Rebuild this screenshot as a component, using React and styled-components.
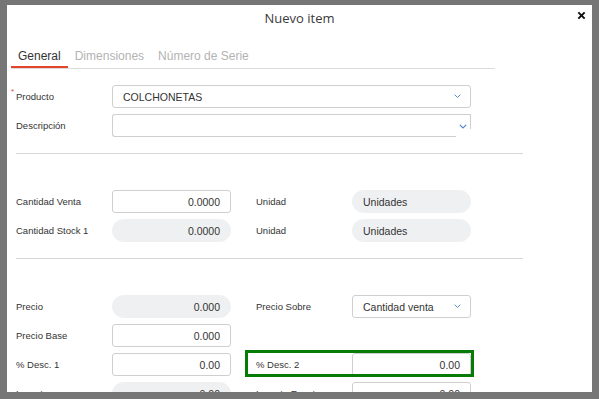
import React from "react";
import styled, { createGlobalStyle } from "styled-components";

const Global = createGlobalStyle`
  html, body { margin: 0; padding: 0; }
  body { font-family: "Liberation Sans", Arial, sans-serif; color: #333; }
`;

const Backdrop = styled.div`
  width: 599px;
  height: 399px;
  box-sizing: border-box;
  padding: 5px 7px 0 7px;
  background: #767676;
  overflow: hidden;
`;

const Modal = styled.div`
  position: relative;
  height: 387px;
  background: #fff;
  overflow: hidden;
`;

const Header = styled.div`
  height: 27px;
  line-height: 27px;
  text-align: center;
  font-family: "Open Sans", sans-serif;
  font-size: 13px;
  color: #3a3a3a;
`;

const Close = styled.button`
  position: absolute;
  top: 4px;
  right: 5px;
  width: 12px;
  height: 12px;
  padding: 0;
  border: 0;
  background: none;
  display: flex;
  align-items: center;
  justify-content: center;
`;

const TabBar = styled.div`
  display: flex;
  margin: 16px 0 0 4px;
  width: 484px;
  border-bottom: 1px solid #dcdcdc;
`;

const Tab = styled.div`
  padding: 0 7px 2px;
  line-height: 16px;
  font-size: 12px;
  color: ${(p) => (p.active ? "#333" : "#b3b3b3")};
  border-bottom: 2px solid ${(p) => (p.active ? "#e4442b" : "transparent")};
`;

const Form = styled.div`
  padding-left: 9px;
`;

const Section = styled.div`
  display: flex;
  flex-direction: column;
  gap: 6px;
  padding-top: ${(p) => p.top}px;
`;

const Divider = styled.div`
  width: 507px;
  height: 1px;
  background: #d6d6d6;
  margin-top: ${(p) => p.top}px;
`;

const Row = styled.div`
  display: flex;
  gap: 25px;
  height: 23px;
`;

const Field = styled.div`
  position: relative;
  display: grid;
  grid-template-columns: 96px ${(p) => (p.wide ? "359px" : "119px")};
  align-items: center;
  ${(p) =>
    p.highlighted &&
    `
    &::after {
      content: "";
      position: absolute;
      top: -3px;
      bottom: -1px;
      left: -11px;
      right: -3px;
      border: 3px solid #067b06;
      pointer-events: none;
    }
  `}
`;

const Label = styled.label`
  position: relative;
  font-size: 9.5px;
  color: #333;
  ${(p) =>
    p.required &&
    `
    &::before {
      content: "*";
      position: absolute;
      left: -5px;
      top: -4px;
      color: #e4442b;
      font-size: 8px;
    }
  `}
`;

const Box = styled.div`
  box-sizing: border-box;
  height: 23px;
  display: flex;
  align-items: center;
  justify-content: ${(p) => (p.align === "right" ? "flex-end" : "space-between")};
  padding: 0 ${(p) => (p.align === "right" ? "10px" : "9px")} 0 10px;
  font-size: 10.5px;
  color: #333;
  background: ${(p) => (p.readOnly ? "#eff0f2" : "#fff")};
  border: 1px solid ${(p) => (p.readOnly ? "#eff0f2" : "#cfcfcf")};
  border-radius: ${(p) => (p.readOnly ? "12px" : "3px")};
`;

const Memo = styled.div`
  display: flex;
  height: 23px;
`;

const MemoArea = styled.div`
  flex: 1;
  border: 1px solid #cfcfcf;
  border-right: 0;
  border-radius: 3px 0 0 3px;
`;

const MemoSide = styled.div`
  width: 14px;
  height: 14px;
  border-top: 1px solid #cfcfcf;
  border-right: 1px solid #cfcfcf;
  display: flex;
  align-items: flex-end;
  justify-content: center;
`;

const Chevron = ({ size = 7 }) => (
  <svg width={size} height={size * 0.6} viewBox="0 0 10 6">
    <polyline points="1,1 5,5 9,1" fill="none" stroke="#4f86cc" strokeWidth="1.4" />
  </svg>
);

const XIcon = () => (
  <svg width="9" height="9" viewBox="0 0 10 10">
    <path d="M1.5 1.5 L8.5 8.5 M8.5 1.5 L1.5 8.5" stroke="#111" strokeWidth="2.2" />
  </svg>
);

const Value = ({ children, readOnly }) => (
  <Box align="right" readOnly={readOnly}>{children}</Box>
);

const Select = ({ children }) => (
  <Box>
    <span>{children}</span>
    <Chevron />
  </Box>
);

export default function App() {
  return (
    <>
      <Global />
      <Backdrop>
        <Modal>
          <Header>Nuevo item</Header>
          <Close aria-label="Cerrar"><XIcon /></Close>
          <TabBar>
            <Tab active>General</Tab>
            <Tab>Dimensiones</Tab>
            <Tab>Número de Serie</Tab>
          </TabBar>
          <Form>
            <Section top={16}>
              <Row>
                <Field wide>
                  <Label required>Producto</Label>
                  <Select>COLCHONETAS</Select>
                </Field>
              </Row>
              <Row>
                <Field wide>
                  <Label>Descripción</Label>
                  <Memo>
                    <MemoArea />
                    <MemoSide>
                      <Chevron size={8} />
                    </MemoSide>
                  </Memo>
                </Field>
              </Row>
            </Section>
            <Divider top={16} />
            <Section top={36}>
              <Row>
                <Field>
                  <Label>Cantidad Venta</Label>
                  <Value>0.0000</Value>
                </Field>
                <Field>
                  <Label>Unidad</Label>
                  <Box readOnly>Unidades</Box>
                </Field>
              </Row>
              <Row>
                <Field>
                  <Label>Cantidad Stock 1</Label>
                  <Value readOnly>0.0000</Value>
                </Field>
                <Field>
                  <Label>Unidad</Label>
                  <Box readOnly>Unidades</Box>
                </Field>
              </Row>
            </Section>
            <Divider top={16} />
            <Section top={36}>
              <Row>
                <Field>
                  <Label>Precio</Label>
                  <Value readOnly>0.000</Value>
                </Field>
                <Field>
                  <Label>Precio Sobre</Label>
                  <Select>Cantidad venta</Select>
                </Field>
              </Row>
              <Row>
                <Field>
                  <Label>Precio Base</Label>
                  <Value>0.000</Value>
                </Field>
              </Row>
              <Row>
                <Field>
                  <Label>% Desc. 1</Label>
                  <Value>0.00</Value>
                </Field>
                <Field highlighted>
                  <Label>% Desc. 2</Label>
                  <Value>0.00</Value>
                </Field>
              </Row>
              <Row>
                <Field>
                  <Label>Importe</Label>
                  <Value readOnly>0.00</Value>
                </Field>
                <Field>
                  <Label>Importe Exento</Label>
                  <Value>0.00</Value>
                </Field>
              </Row>
            </Section>
          </Form>
        </Modal>
      </Backdrop>
    </>
  );
}
